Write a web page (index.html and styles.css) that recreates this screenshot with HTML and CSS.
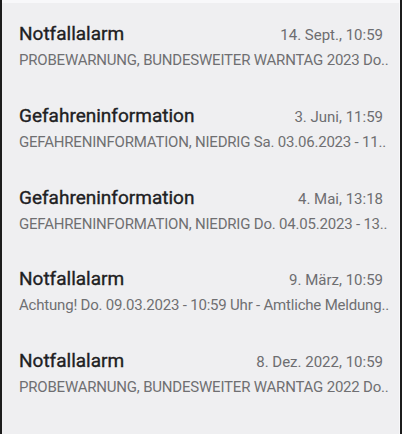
FILE: index.html
```html
<!DOCTYPE html>
<html lang="de">
<head>
<meta charset="utf-8">
<link rel="stylesheet" href="styles.css">
</head>
<body>
<div class="screen">
  <div class="row">
    <div class="head"><span class="title">Notfallalarm</span><span class="date">14. Sept., 10:59</span></div>
    <div class="sub">PROBEWARNUNG, BUNDESWEITER WARNTAG 2023 Do..</div>
  </div>
  <div class="row">
    <div class="head"><span class="title">Gefahreninformation</span><span class="date">3. Juni, 11:59</span></div>
    <div class="sub">GEFAHRENINFORMATION, NIEDRIG Sa. 03.06.2023 - 11..</div>
  </div>
  <div class="row">
    <div class="head"><span class="title">Gefahreninformation</span><span class="date">4. Mai, 13:18</span></div>
    <div class="sub">GEFAHRENINFORMATION, NIEDRIG Do. 04.05.2023 - 13..</div>
  </div>
  <div class="row">
    <div class="head"><span class="title">Notfallalarm</span><span class="date">9. März, 10:59</span></div>
    <div class="sub">Achtung! Do. 09.03.2023 - 10:59 Uhr - Amtliche Meldung..</div>
  </div>
  <div class="row">
    <div class="head"><span class="title">Notfallalarm</span><span class="date">8. Dez. 2022, 10:59</span></div>
    <div class="sub">PROBEWARNUNG, BUNDESWEITER WARNTAG 2022 Do..</div>
  </div>
</div>
</body>
</html>
```
FILE: styles.css
```css
html, body {
  margin: 0;
  padding: 0;
  background: #1c1c1c;
  height: 434px;
  overflow: hidden;
}
.screen {
  margin: 0 2px;
  height: 434px;
  background: #efeff1;
  border-top: 3px solid #f8f8fa;
  border-right: 1px solid #f8f8fa;
  box-sizing: border-box;
  font-family: Roboto, "Noto Sans", sans-serif;
}
.row {
  height: 81.75px;
  padding: 18px 16px 0 17px;
  box-sizing: border-box;
}
.head {
  display: flex;
  justify-content: space-between;
  align-items: baseline;
}
.title {
  font-size: 19px;
  font-weight: 400;
  -webkit-text-stroke: 0.35px #202022;
  color: #202022;
  line-height: 25px;
}
.date {
  font-size: 15px;
  color: #6d6d70;
}
.sub {
  margin-top: 4px;
  font-size: 15px;
  letter-spacing: -0.2px;
  color: #6f6f72;
  line-height: 20px;
  white-space: nowrap;
}
```
